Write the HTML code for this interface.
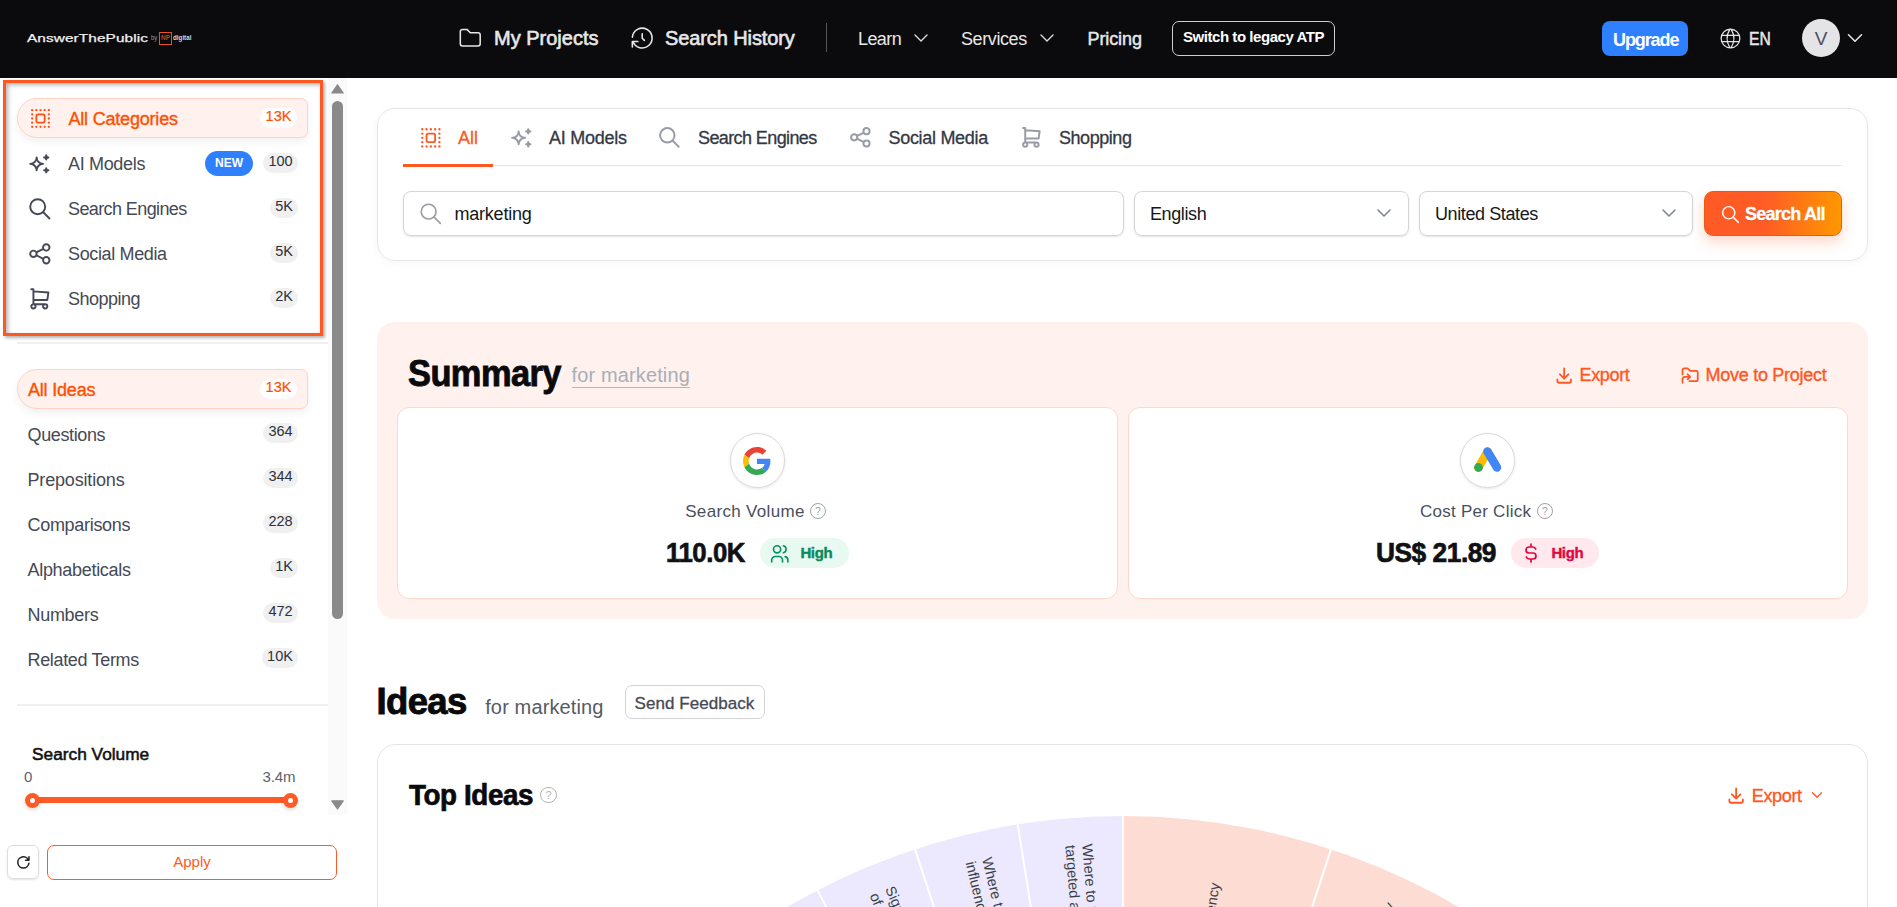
<!DOCTYPE html>
<html><head><meta charset="utf-8">
<style>
*{box-sizing:border-box;margin:0;padding:0}
html,body{width:1897px;height:907px;overflow:hidden;background:#fff;font-family:"Liberation Sans",sans-serif;color:#3d4350}
.a{position:absolute}
.t{position:absolute;white-space:nowrap;line-height:20px;height:20px}
svg{position:absolute;overflow:visible}
.ic{fill:none;stroke-linecap:round;stroke-linejoin:round}
#hdr{left:0;top:0;width:1897px;height:78px;background:#0b0b0e}
.hn{color:#e8e8e8}
.badge{position:absolute;height:24px;border-radius:12px;background:#f0f0f1;color:#2d313a;font-size:15px;line-height:24px;text-align:center}
.pill{position:absolute;left:17px;width:291px;height:40px;border-radius:20px 7px 7px 20px;background:#fff1ee;border:1px solid #ffd3c4;box-shadow:0 4px 8px rgba(0,0,0,0.06)}
</style></head><body>
<!-- HEADER -->
<div id="hdr" class="a">
  <div class="t" style="left:27px;top:28px;color:#f2f2f2;font-size:11.7px;letter-spacing:0.1px;transform:scaleX(1.31);transform-origin:0 0;-webkit-text-stroke:0.25px #f2f2f2">AnswerThePublic</div>
  <div class="t" style="left:150.5px;top:28px;color:#9a9a9a;font-size:7px;transform:scaleX(0.85);transform-origin:0 0">by</div>
  <div class="a" style="left:159px;top:32px;width:13px;height:12.5px;border:1.3px solid #e8531d"></div>
  <div class="t" style="left:159px;width:13px;text-align:center;top:28px;color:#c0441a;font-size:6.5px;font-weight:700">NP</div>
  <div class="t" style="left:173px;top:28px;color:#d8d8d8;font-size:7.2px;font-weight:700;transform:scaleX(0.87);transform-origin:0 0">digital</div>

  <svg style="left:456.8px;top:25.3px" width="26.5" height="26.5" viewBox="0 0 24 24"><path class="ic" stroke="#e6e6e6" stroke-width="1.4" d="M5 4h4l3 3h7a2 2 0 0 1 2 2v8a2 2 0 0 1 -2 2h-14a2 2 0 0 1 -2 -2v-11a2 2 0 0 1 2 -2"/></svg>
  <div class="t hn" style="left:494px;top:28px;font-size:20px;letter-spacing:0px;-webkit-text-stroke:0.6px #e8e8e8">My Projects</div>
  <svg style="left:629px;top:25.4px" width="26.4" height="26.4" viewBox="0 0 24 24"><path class="ic" stroke="#e6e6e6" stroke-width="1.45" d="M12 8l0 4l2 2M3.05 11a9 9 0 1 1 .5 4m-.5 5v-5h5"/></svg>
  <div class="t hn" style="left:665px;top:28px;font-size:20px;letter-spacing:-0.1px;-webkit-text-stroke:0.6px #e8e8e8">Search History</div>
  <div class="a" style="left:826px;top:23px;width:1px;height:29px;background:#555"></div>
  <div class="t hn" style="left:858px;top:29px;font-size:18px;letter-spacing:-0.6px">Learn</div>
  <svg style="left:909px;top:26px" width="24" height="24" viewBox="0 0 24 24"><path class="ic" stroke="#ddd" stroke-width="1.4" d="M6 9l6 6l6 -6"/></svg>
  <div class="t hn" style="left:961px;top:29px;font-size:18px;letter-spacing:-0.4px">Services</div>
  <svg style="left:1035px;top:26px" width="24" height="24" viewBox="0 0 24 24"><path class="ic" stroke="#ddd" stroke-width="1.4" d="M6 9l6 6l6 -6"/></svg>
  <div class="t hn" style="left:1087.5px;top:29px;font-size:18px;letter-spacing:-0.1px;-webkit-text-stroke:0.45px #e8e8e8">Pricing</div>
  <div class="a" style="left:1172px;top:21px;width:163px;height:35px;border:1px solid #cfcfcf;border-radius:7px"></div>
  <div class="t" style="left:1183px;top:26.8px;color:#fff;font-size:15px;font-weight:700;letter-spacing:-0.45px">Switch to legacy ATP</div>
  <div class="a" style="left:1602px;top:21px;width:86px;height:35px;background:#2f80ff;border-radius:8px"></div>
  <div class="t" style="left:1613px;top:29.5px;color:#fff;font-size:18px;font-weight:700;letter-spacing:-1.1px">Upgrade</div>
  <svg style="left:1717.6px;top:25.6px" width="25" height="25" viewBox="0 0 24 24"><path class="ic" stroke="#e6e6e6" stroke-width="1.2" d="M3 12a9 9 0 1 0 18 0a9 9 0 0 0 -18 0M3.6 9h16.8M3.6 15h16.8M11.5 3a17 17 0 0 0 0 18M12.5 3a17 17 0 0 1 0 18"/></svg>
  <div class="t hn" style="left:1748.8px;top:28.6px;font-size:18px;letter-spacing:0px;-webkit-text-stroke:0.5px #e8e8e8;transform:scaleX(0.87);transform-origin:0 0">EN</div>
  <div class="a" style="left:1802px;top:19px;width:38px;height:38px;border-radius:50%;background:#e4e4e6"></div>
  <div class="t" style="left:1802px;top:29px;width:38px;text-align:center;color:#4b5060;font-size:19px">V</div>
  <svg style="left:1842px;top:24.9px" width="26" height="26" viewBox="0 0 24 24"><path class="ic" stroke="#e6e6e6" stroke-width="1.4" d="M6 9l6 6l6 -6"/></svg>
</div>
<!-- SIDEBAR -->
<div class="a" style="left:328px;top:78px;width:19px;height:737px;background:#fafafa"></div>
<svg style="left:331px;top:84px" width="13" height="10" viewBox="0 0 13 10"><path d="M6.5 0.8L12.2 9H0.8z" fill="#8a8a8a" stroke="#8a8a8a" stroke-width="1.2" stroke-linejoin="round"/></svg>
<div class="a" style="left:332px;top:101px;width:11px;height:518px;border-radius:5.5px;background:#8a8a8a"></div>
<svg style="left:331px;top:800px" width="13" height="10" viewBox="0 0 13 10"><path d="M0.8 0.8H12.2L6.5 9z" fill="#8a8a8a" stroke="#8a8a8a" stroke-width="1.2" stroke-linejoin="round"/></svg>

<div class="pill" style="top:98px"></div>
<svg style="left:28px;top:106px" width="25" height="25" viewBox="0 0 24 24"><path class="ic" stroke="#ff4f12" stroke-width="2.2" d="M4 4v.01M8 4v.01M12 4v.01M16 4v.01M20 4v.01M4 8v.01M4 12v.01M4 16v.01M4 20v.01M8 20v.01M12 20v.01M16 20v.01M20 20v.01M20 16v.01M20 12v.01M20 8v.01"/><path class="ic" stroke="#ff4f12" stroke-width="1.7" d="M9.5 8h5a1.5 1.5 0 0 1 1.5 1.5v5a1.5 1.5 0 0 1 -1.5 1.5h-5a1.5 1.5 0 0 1 -1.5 -1.5v-5a1.5 1.5 0 0 1 1.5 -1.5z"/></svg>
<div class="t" style="left:68.5px;top:109px;font-size:18px;color:#ff4f00;letter-spacing:-0.2px;-webkit-text-stroke:0.35px #ff4f00">All Categories</div>
<div class="badge" style="left:260px;top:108.3px;width:37px;height:19.6px;line-height:17.5px;font-size:14.5px;background:#fff;color:#ff4f00;-webkit-text-stroke:0.2px #ff4f00">13K</div>

<svg style="left:26.7px;top:150.5px" width="25.7" height="25.7" viewBox="0 0 24 24"><path class="ic" stroke="#454955" stroke-width="1.8" d="M16 18a2 2 0 0 1 2 2a2 2 0 0 1 2 -2a2 2 0 0 1 -2 -2a2 2 0 0 1 -2 2zm0 -12a2 2 0 0 1 2 2a2 2 0 0 1 2 -2a2 2 0 0 1 -2 -2a2 2 0 0 1 -2 2zm-7 12a6 6 0 0 1 6 -6a6 6 0 0 1 -6 -6a6 6 0 0 1 -6 6a6 6 0 0 1 6 6z"/></svg>
<div class="t" style="left:68px;top:153.8px;font-size:18px;color:#454955;letter-spacing:-0.33px">AI Models</div>
<div class="a" style="left:205px;top:151px;width:48px;height:25px;border-radius:12.5px;background:#2f80ff;color:#fff;font-size:12px;font-weight:700;line-height:25px;text-align:center">NEW</div>
<div class="badge" style="left:263px;top:153px;width:35px;height:20px;line-height:17.2px;font-size:14.5px">100</div>

<svg style="left:27.2px;top:196px" width="25.7" height="25.7" viewBox="0 0 24 24"><path class="ic" stroke="#454955" stroke-width="1.8" d="M10 10m-7 0a7 7 0 1 0 14 0a7 7 0 1 0 -14 0M21 21l-6 -6"/></svg>
<div class="t" style="left:68px;top:198.8px;font-size:18px;color:#454955;letter-spacing:-0.6px">Search Engines</div>
<div class="badge" style="left:270px;top:198px;width:28px;height:20px;line-height:17.2px;font-size:14.5px">5K</div>

<svg style="left:27.2px;top:240.9px" width="25.7" height="25.7" viewBox="0 0 24 24"><path class="ic" stroke="#454955" stroke-width="1.8" d="M6 12m-3 0a3 3 0 1 0 6 0a3 3 0 1 0 -6 0M18 6m-3 0a3 3 0 1 0 6 0a3 3 0 1 0 -6 0M18 18m-3 0a3 3 0 1 0 6 0a3 3 0 1 0 -6 0M8.7 10.7l6.6 -3.4M8.7 13.3l6.6 3.4"/></svg>
<div class="t" style="left:68px;top:243.8px;font-size:18px;color:#454955;letter-spacing:-0.36px">Social Media</div>
<div class="badge" style="left:270px;top:243px;width:28px;height:20px;line-height:17.2px;font-size:14.5px">5K</div>

<svg style="left:27px;top:286px" width="25.7" height="25.7" viewBox="0 0 24 24"><path class="ic" stroke="#454955" stroke-width="1.8" d="M6 19m-2 0a2 2 0 1 0 4 0a2 2 0 1 0 -4 0M17 19m-2 0a2 2 0 1 0 4 0a2 2 0 1 0 -4 0M17 17h-11v-14h-2M6 5l14 1l-1 7h-13"/></svg>
<div class="t" style="left:68px;top:288.8px;font-size:18px;color:#454955;letter-spacing:-0.5px">Shopping</div>
<div class="badge" style="left:270px;top:288px;width:28px;height:20px;line-height:17.2px;font-size:14.5px">2K</div>

<div class="a" style="left:3px;top:80px;width:320px;height:256px;border:3px solid #ff5722;box-shadow:2px 2px 3px rgba(0,0,0,.3), inset 2px 2px 4px rgba(0,0,0,.3)"></div>

<div class="a" style="left:17px;top:342px;width:311px;height:2px;background:#f0f0f0"></div>
<div class="pill" style="top:369px"></div>
<div class="t" style="left:28px;top:379.8px;font-size:18px;color:#ff4f00;letter-spacing:-0.2px;-webkit-text-stroke:0.35px #ff4f00">All Ideas</div>
<div class="badge" style="left:260px;top:379px;width:37px;height:19.6px;line-height:17.5px;font-size:14.5px;background:#fff;color:#ff4f00;-webkit-text-stroke:0.2px #ff4f00">13K</div>
<div class="t" style="left:27.5px;top:424.8px;font-size:18px;color:#454955;letter-spacing:-0.37px">Questions</div>
<div class="badge" style="left:263px;top:423px;width:35px;height:20px;line-height:17.2px;font-size:14.5px">364</div>
<div class="t" style="left:27.5px;top:469.8px;font-size:18px;color:#454955;letter-spacing:-0.17px">Prepositions</div>
<div class="badge" style="left:263px;top:468px;width:35px;height:20px;line-height:17.2px;font-size:14.5px">344</div>
<div class="t" style="left:27.5px;top:514.8px;font-size:18px;color:#454955;letter-spacing:-0.3px">Comparisons</div>
<div class="badge" style="left:263px;top:513px;width:35px;height:20px;line-height:17.2px;font-size:14.5px">228</div>
<div class="t" style="left:27.5px;top:559.8px;font-size:18px;color:#454955;letter-spacing:-0.3px">Alphabeticals</div>
<div class="badge" style="left:270px;top:558px;width:28px;height:20px;line-height:17.2px;font-size:14.5px">1K</div>
<div class="t" style="left:27.5px;top:604.8px;font-size:18px;color:#454955;letter-spacing:-0.3px">Numbers</div>
<div class="badge" style="left:263px;top:603px;width:35px;height:20px;line-height:17.2px;font-size:14.5px">472</div>
<div class="t" style="left:27.5px;top:649.8px;font-size:18px;color:#454955;letter-spacing:-0.33px">Related Terms</div>
<div class="badge" style="left:262px;top:648px;width:36px;height:20px;line-height:17.2px;font-size:14.5px">10K</div>
<div class="a" style="left:17px;top:704px;width:311px;height:2px;background:#f0f0f0"></div>
<div class="t" style="left:32px;top:743.6px;font-size:17.3px;color:#111;letter-spacing:0px;-webkit-text-stroke:0.55px #111">Search Volume</div>
<div class="t" style="left:24px;top:767px;font-size:15px;color:#5a6270">0</div>
<div class="t" style="left:262.5px;top:767px;font-size:15px;color:#5a6270;letter-spacing:-0.1px">3.4m</div>
<div class="a" style="left:32px;top:796.5px;width:258px;height:6.5px;background:#ff5a26"></div>
<div class="a" style="left:24.5px;top:792.5px;width:15px;height:15px;border-radius:50%;border:5px solid #ff5a26;background:#fff;box-shadow:0 2px 4px rgba(0,0,0,.15)"></div>
<div class="a" style="left:282.5px;top:792.5px;width:15px;height:15px;border-radius:50%;border:5px solid #ff5a26;background:#fff;box-shadow:0 2px 4px rgba(0,0,0,.15)"></div>
<div class="a" style="left:7px;top:845px;width:31.5px;height:34px;border:1px solid #dedede;border-radius:6px;box-shadow:0 1px 2px rgba(0,0,0,.12)"></div>
<svg style="left:15.2px;top:853.8px" width="16.8" height="16.8" viewBox="0 0 24 24"><path class="ic" stroke="#222" stroke-width="2.1" d="M19.933 13.041a8 8 0 1 1 -9.925 -8.788c3.899 -1 7.935 1.007 9.425 4.747M20 4v5h-5"/></svg>
<div class="a" style="left:47px;top:845px;width:290px;height:35px;border:1px solid #ff5a26;border-radius:7px"></div>
<div class="t" style="left:47px;top:852px;width:290px;text-align:center;font-size:15px;color:#ff5a26">Apply</div>

<!-- MAIN -->
<div class="a" style="left:377px;top:108px;width:1491px;height:153px;border:1px solid #e6e6e8;border-radius:18px;box-shadow:0 2px 8px rgba(0,0,0,.04)"></div>
<div class="a" style="left:403px;top:164.5px;width:1439px;height:1px;background:#e3e3e5"></div>
<div class="a" style="left:403px;top:164px;width:90px;height:3px;background:#ff5722"></div>
<svg style="left:417.5px;top:124.5px" width="25.7" height="25.7" viewBox="0 0 24 24"><path class="ic" stroke="#ff5722" stroke-width="2.2" d="M4 4v.01M8 4v.01M12 4v.01M16 4v.01M20 4v.01M4 8v.01M4 12v.01M4 16v.01M4 20v.01M8 20v.01M12 20v.01M16 20v.01M20 20v.01M20 16v.01M20 12v.01M20 8v.01"/><path class="ic" stroke="#ff5722" stroke-width="1.7" d="M9.5 8h5a1.5 1.5 0 0 1 1.5 1.5v5a1.5 1.5 0 0 1 -1.5 1.5h-5a1.5 1.5 0 0 1 -1.5 -1.5v-5a1.5 1.5 0 0 1 1.5 -1.5z"/></svg>
<div class="t" style="left:458px;top:127.5px;font-size:18px;color:#ff5722;-webkit-text-stroke:0.3px #ff5722">All</div>
<svg style="left:508.9px;top:125.1px" width="25.7" height="25.7" viewBox="0 0 24 24"><path class="ic" stroke="#9a9ca5" stroke-width="1.9" d="M16 18a2 2 0 0 1 2 2a2 2 0 0 1 2 -2a2 2 0 0 1 -2 -2a2 2 0 0 1 -2 2zm0 -12a2 2 0 0 1 2 2a2 2 0 0 1 2 -2a2 2 0 0 1 -2 -2a2 2 0 0 1 -2 2zm-7 12a6 6 0 0 1 6 -6a6 6 0 0 1 -6 -6a6 6 0 0 1 -6 6a6 6 0 0 1 6 6z"/></svg>
<div class="t" style="left:549px;top:127.5px;font-size:18px;color:#333845;letter-spacing:-0.25px;-webkit-text-stroke:0.3px #333845">AI Models</div>
<svg style="left:657px;top:125px" width="24.8" height="24.8" viewBox="0 0 24 24"><path class="ic" stroke="#9a9ca5" stroke-width="1.9" d="M10 10m-7 0a7 7 0 1 0 14 0a7 7 0 1 0 -14 0M21 21l-6 -6"/></svg>
<div class="t" style="left:698px;top:127.5px;font-size:18px;color:#333845;letter-spacing:-0.6px;-webkit-text-stroke:0.3px #333845">Search Engines</div>
<svg style="left:848.1px;top:125.1px" width="24.7" height="24.7" viewBox="0 0 24 24"><path class="ic" stroke="#9a9ca5" stroke-width="1.9" d="M6 12m-3 0a3 3 0 1 0 6 0a3 3 0 1 0 -6 0M18 6m-3 0a3 3 0 1 0 6 0a3 3 0 1 0 -6 0M18 18m-3 0a3 3 0 1 0 6 0a3 3 0 1 0 -6 0M8.7 10.7l6.6 -3.4M8.7 13.3l6.6 3.4"/></svg>
<div class="t" style="left:888.5px;top:127.5px;font-size:18px;color:#333845;letter-spacing:-0.3px;-webkit-text-stroke:0.3px #333845">Social Media</div>
<svg style="left:1018.9px;top:125.1px" width="24.8" height="24.8" viewBox="0 0 24 24"><path class="ic" stroke="#9a9ca5" stroke-width="1.9" d="M6 19m-2 0a2 2 0 1 0 4 0a2 2 0 1 0 -4 0M17 19m-2 0a2 2 0 1 0 4 0a2 2 0 1 0 -4 0M17 17h-11v-14h-2M6 5l14 1l-1 7h-13"/></svg>
<div class="t" style="left:1059px;top:127.5px;font-size:18px;color:#333845;letter-spacing:-0.45px;-webkit-text-stroke:0.3px #333845">Shopping</div>

<div class="a" style="left:403px;top:191px;width:720.5px;height:44.5px;border:1px solid #d5d6da;border-radius:8px;box-shadow:0 1px 2px rgba(0,0,0,.12)"></div>
<svg style="left:417.8px;top:201.2px" width="25.5" height="25.5" viewBox="0 0 24 24"><path class="ic" stroke="#9a9ca5" stroke-width="1.5" d="M10 10m-7 0a7 7 0 1 0 14 0a7 7 0 1 0 -14 0M21 21l-6 -6"/></svg>
<div class="t" style="left:454.5px;top:203.8px;font-size:18px;color:#15171c;letter-spacing:-0.22px">marketing</div>
<div class="a" style="left:1134px;top:191px;width:274.5px;height:44.5px;border:1px solid #d5d6da;border-radius:8px;box-shadow:0 1px 2px rgba(0,0,0,.12)"></div>
<div class="t" style="left:1150px;top:203.5px;font-size:18px;color:#15171c;letter-spacing:-0.4px">English</div>
<svg style="left:1372px;top:201.3px" width="24" height="24" viewBox="0 0 24 24"><path class="ic" stroke="#7d8290" stroke-width="1.5" d="M6 9l6 6l6 -6"/></svg>
<div class="a" style="left:1419px;top:191px;width:274px;height:44.5px;border:1px solid #d5d6da;border-radius:8px;box-shadow:0 1px 2px rgba(0,0,0,.12)"></div>
<div class="t" style="left:1435px;top:203.5px;font-size:18px;color:#15171c;letter-spacing:-0.4px">United States</div>
<svg style="left:1657px;top:201.3px" width="24" height="24" viewBox="0 0 24 24"><path class="ic" stroke="#7d8290" stroke-width="1.5" d="M6 9l6 6l6 -6"/></svg>
<div class="a" style="left:1704px;top:191px;width:137.5px;height:44.5px;border:1px solid #ea5a12;border-radius:9px;background:linear-gradient(90deg,#ff5a25 0%,#ff5d25 45%,#ff9800 100%);box-shadow:0 6px 14px rgba(255,90,37,.25)"></div>
<svg style="left:1719.8px;top:203.8px" width="21" height="21" viewBox="0 0 24 24"><path class="ic" stroke="#fff" stroke-width="1.7" d="M10 10m-7 0a7 7 0 1 0 14 0a7 7 0 1 0 -14 0M21 21l-6 -6"/></svg>
<div class="t" style="left:1745px;top:203.8px;font-size:18px;font-weight:700;color:#fff;letter-spacing:-0.75px;-webkit-text-stroke:0.3px #fff;text-shadow:0 1px 1px rgba(0,0,0,.15)">Search All</div>

<!-- SUMMARY -->
<div class="a" style="left:377px;top:322px;width:1491px;height:296.5px;background:#fff1ee;border-radius:18px"></div>
<div class="t" style="left:407.5px;top:353.5px;height:40px;line-height:40px;font-size:37px;font-weight:700;color:#0a0a0c;letter-spacing:-0.6px;-webkit-text-stroke:0.9px #0a0a0c;transform:scaleX(0.93);transform-origin:0 0">Summary</div>
<div class="t" style="left:571.5px;top:365px;font-size:20px;color:#a9aeb6;letter-spacing:0.13px">for marketing</div>
<div class="a" style="left:571.5px;top:386.5px;width:118.5px;height:1.3px;background:#b3b6bc"></div>
<svg style="left:1553.7px;top:364.5px" width="20.3" height="20.3" viewBox="0 0 24 24"><path class="ic" stroke="#ff5722" stroke-width="2.1" d="M4 17v2a2 2 0 0 0 2 2h12a2 2 0 0 0 2 -2v-2M7 11l5 5l5 -5M12 4l0 12"/></svg>
<div class="t" style="left:1579.5px;top:364.5px;font-size:18px;color:#ff5722;letter-spacing:-0.35px;-webkit-text-stroke:0.35px #ff5722">Export</div>
<svg style="left:1679.9px;top:364.5px" width="20.3" height="20.3" viewBox="0 0 24 24"><path class="ic" stroke="#ff5722" stroke-width="2.1" d="M3 21v-4a3 3 0 0 1 3 -3h5M9 17l3 -3l-3 -3M3 11v-5a2 2 0 0 1 2 -2h4l3 3h7a2 2 0 0 1 2 2v8a2 2 0 0 1 -2 2h-8"/></svg>
<div class="t" style="left:1705.5px;top:364.5px;font-size:18px;color:#ff5722;letter-spacing:-0.27px;-webkit-text-stroke:0.35px #ff5722">Move to Project</div>

<div class="a" style="left:397px;top:407px;width:721px;height:192px;background:#fff;border:1px solid #ffd7cb;border-radius:12px"></div>
<div class="a" style="left:1128px;top:407px;width:720px;height:192px;background:#fff;border:1px solid #ffd7cb;border-radius:12px"></div>

<div class="a" style="left:730.3px;top:433.2px;width:54.4px;height:54.4px;border:1px solid #d9d9d9;border-radius:50%;box-shadow:0 1px 3px rgba(0,0,0,.1)"></div>
<svg style="left:743px;top:447px" width="28" height="28" viewBox="0 0 48 48"><path fill="#EA4335" d="M24 9.5c3.54 0 6.71 1.22 9.21 3.6l6.85-6.85C35.9 2.38 30.47 0 24 0 14.62 0 6.51 5.38 2.56 13.22l7.98 6.19C12.43 13.72 17.74 9.5 24 9.5z"/><path fill="#4285F4" d="M46.98 24.55c0-1.57-.15-3.09-.38-4.550H24v9.02h12.94c-.58 2.96-2.26 5.48-4.78 7.18l7.730 6c4.51-4.18 7.09-10.36 7.09-17.65z"/><path fill="#FBBC05" d="M10.53 28.59c-.48-1.45-.76-2.99-.76-4.59s.27-3.14.76-4.59l-7.98-6.19C.92 16.46 0 20.12 0 24c0 3.88.92 7.54 2.56 10.78l7.97-6.19z"/><path fill="#34A853" d="M24 48c6.48 0 11.93-2.13 15.89-5.81l-7.73-6c-2.15 1.45-4.92 2.3-8.16 2.3-6.26 0-11.570-4.22-13.47-9.91l-7.98 6.19C6.51 42.62 14.62 48 24 48z"/></svg>
<div class="t" style="left:685.2px;top:501.8px;font-size:17px;color:#4a4f5c;letter-spacing:0.33px">Search Volume</div>
<div class="a" style="left:810.0px;top:503.0px;width:16px;height:16px;border:1.3px solid #a3a3a3;border-radius:50%;color:#a3a3a3;font-size:10.5px;line-height:14.6px;text-align:center">?</div>
<div class="t" style="left:666px;top:538px;height:30px;line-height:30px;font-size:28px;font-weight:700;color:#101114;letter-spacing:-0.5px;-webkit-text-stroke:0.7px #101114;transform:scaleX(0.92);transform-origin:0 0">110.0K</div>
<div class="a" style="left:760px;top:538px;width:89px;height:30px;border-radius:15px;background:#e7f9f1"></div>
<svg style="left:769px;top:542.5px" width="21.6" height="21.6" viewBox="0 0 24 24"><path class="ic" stroke="#0a8f5f" stroke-width="1.8" d="M9 7m-4 0a4 4 0 1 0 8 0a4 4 0 1 0 -8 0M3 21v-2a4 4 0 0 1 4 -4h4a4 4 0 0 1 4 4v2M16 3.130a4 4 0 0 1 0 7.75M21 21v-2a4 4 0 0 0 -3 -3.850"/></svg>
<div class="t" style="left:800.4px;top:542.5px;font-size:15px;font-weight:700;color:#0a8a5a;letter-spacing:-0.35px;-webkit-text-stroke:0.4px #0a8a5a">High</div>

<div class="a" style="left:1460px;top:433px;width:54.5px;height:54.5px;border:1px solid #d9d9d9;border-radius:50%;box-shadow:0 1px 3px rgba(0,0,0,.1)"></div>
<svg style="left:1460px;top:433px" width="54.5" height="54.5" viewBox="0 0 54.5 54.5"><path d="M18.5 34.5L27.5 18.5" stroke="#FBBC04" stroke-width="8.5" stroke-linecap="round"/><path d="M27.5 18.5L37 34.5" stroke="#4285F4" stroke-width="8.5" stroke-linecap="round"/><circle cx="18.5" cy="34.5" r="4.4" fill="#34A853"/></svg>
<div class="t" style="left:1420px;top:501.8px;font-size:17px;color:#4a4f5c;letter-spacing:0.25px">Cost Per Click</div>
<div class="a" style="left:1537.0px;top:503.0px;width:16px;height:16px;border:1.3px solid #a3a3a3;border-radius:50%;color:#a3a3a3;font-size:10.5px;line-height:14.6px;text-align:center">?</div>
<div class="t" style="left:1376px;top:538px;height:30px;line-height:30px;font-size:28px;font-weight:700;color:#101114;letter-spacing:-0.5px;-webkit-text-stroke:0.7px #101114;transform:scaleX(0.939);transform-origin:0 0">US$ 21.89</div>
<div class="a" style="left:1511px;top:538px;width:88px;height:30px;border-radius:15px;background:#ffe9ee"></div>
<svg style="left:1519px;top:541px" width="24" height="24" viewBox="0 0 24 24"><path class="ic" stroke="#e0073f" stroke-width="1.7" d="M16.7 8a3 3 0 0 0 -2.7 -2h-4a3 3 0 0 0 0 6h4a3 3 0 0 1 0 6h-4a3 3 0 0 1 -2.700 -2M12 3v3m0 12v3"/></svg>
<div class="t" style="left:1551.4px;top:542.5px;font-size:15px;font-weight:700;color:#e0073f;letter-spacing:-0.35px;-webkit-text-stroke:0.4px #e0073f">High</div>

<!-- IDEAS -->
<div class="t" style="left:376.4px;top:682.3px;height:40px;line-height:40px;font-size:36.5px;font-weight:700;color:#0a0a0c;letter-spacing:-0.6px;-webkit-text-stroke:0.9px #0a0a0c;transform:scaleX(1.0);transform-origin:0 0">Ideas</div>
<div class="t" style="left:485.2px;top:697px;font-size:20px;color:#555b66;letter-spacing:0.13px">for marketing</div>
<div class="a" style="left:624.5px;top:684.5px;width:140px;height:34px;border:1px solid #d3d3d6;border-radius:7px"></div>
<div class="t" style="left:634.6px;top:693.6px;font-size:17px;color:#454a55;letter-spacing:0.05px;-webkit-text-stroke:0.3px #454a55">Send Feedback</div>

<div class="a" style="left:377px;top:744px;width:1491px;height:400px;border:1px solid #e4e4e6;border-radius:19px"></div>
<svg style="left:0;top:0" width="1897" height="907" viewBox="0 0 1897 907"><path d="M1123,1482 L457.00,1482.00 A666,666 0 0 1 1123.00,816.00 Z" fill="#ece8fd"/><path d="M1123,1482 L1123.00,816.00 A666,666 0 0 1 1789.00,1482.00 Z" fill="#fddcd3"/><line x1="1123" y1="1482" x2="1017.35" y2="822.41" stroke="#fff" stroke-width="2"/><line x1="1123" y1="1482" x2="914.36" y2="847.42" stroke="#fff" stroke-width="2"/><line x1="1123" y1="1482" x2="816.62" y2="888.40" stroke="#fff" stroke-width="2"/><line x1="1123" y1="1482" x2="726.60" y2="944.33" stroke="#fff" stroke-width="2"/><line x1="1123" y1="1482" x2="1123.00" y2="814.00" stroke="#fff" stroke-width="2"/><line x1="1123" y1="1482" x2="1331.64" y2="847.42" stroke="#fff" stroke-width="2"/><line x1="1123" y1="1482" x2="1519.40" y2="944.33" stroke="#fff" stroke-width="2"/><text x="0" y="0" transform="translate(1082.28,844.22) rotate(85.45)" text-anchor="start" font-family="Liberation Sans" font-size="14.5" fill="#3b3f48">Where to find</text><text x="0" y="0" transform="translate(1065.33,845.57) rotate(85.45)" text-anchor="start" font-family="Liberation Sans" font-size="14.5" fill="#3b3f48">targeted ads</text><text x="0" y="0" transform="translate(981.92,858.69) rotate(76.35)" text-anchor="start" font-family="Liberation Sans" font-size="14.5" fill="#3b3f48">Where to find</text><text x="0" y="0" transform="translate(965.40,862.70) rotate(76.35)" text-anchor="start" font-family="Liberation Sans" font-size="14.5" fill="#3b3f48">influencers</text><text x="0" y="0" transform="translate(885.11,888.85) rotate(67.25)" text-anchor="start" font-family="Liberation Sans" font-size="14.5" fill="#3b3f48">Signs</text><text x="0" y="0" transform="translate(869.44,895.42) rotate(67.25)" text-anchor="start" font-family="Liberation Sans" font-size="14.5" fill="#3b3f48">of marketing</text><text x="0" y="0" transform="translate(794.30,933.94) rotate(58.15)" text-anchor="start" font-family="Liberation Sans" font-size="14.5" fill="#3b3f48">How to</text><text x="0" y="0" transform="translate(779.86,942.91) rotate(58.15)" text-anchor="start" font-family="Liberation Sans" font-size="14.5" fill="#3b3f48">marketing</text><text x="0" y="0" transform="translate(1219.8,883.5) rotate(-80.90)" text-anchor="end" font-family="Liberation Sans" font-size="14.5" fill="#3b3f48">digital marketing agency</text><text x="0" y="0" transform="translate(1394.81,905.45) rotate(-62.70)" text-anchor="end" font-family="Liberation Sans" font-size="14.5" fill="#3b3f48">marketing strategy</text></svg>
<div class="t" style="left:408.6px;top:779.5px;height:30px;line-height:30px;font-size:29px;font-weight:700;color:#0a0a0c;letter-spacing:-0.4px;-webkit-text-stroke:0.7px #0a0a0c;transform:scaleX(0.958);transform-origin:0 0">Top Ideas</div>
<div class="a" style="left:540.1px;top:786.9000000000001px;width:16.6px;height:16.6px;border:1.3px solid #b3b3b3;border-radius:50%;color:#b3b3b3;font-size:10.8px;line-height:15.2px;text-align:center">?</div>
<svg style="left:1725.9px;top:784.8px" width="20.3" height="20.3" viewBox="0 0 24 24"><path class="ic" stroke="#ff5722" stroke-width="2.1" d="M4 17v2a2 2 0 0 0 2 2h12a2 2 0 0 0 2 -2v-2M7 11l5 5l5 -5M12 4l0 12"/></svg>
<div class="t" style="left:1751.8px;top:785.5px;font-size:18px;color:#ff5722;letter-spacing:-0.35px;-webkit-text-stroke:0.35px #ff5722">Export</div>
<svg style="left:1808px;top:785.5px" width="18" height="18" viewBox="0 0 24 24"><path class="ic" stroke="#ff5722" stroke-width="1.7" d="M6 9l6 6l6 -6"/></svg>
<div id="main"></div>
</body></html>
